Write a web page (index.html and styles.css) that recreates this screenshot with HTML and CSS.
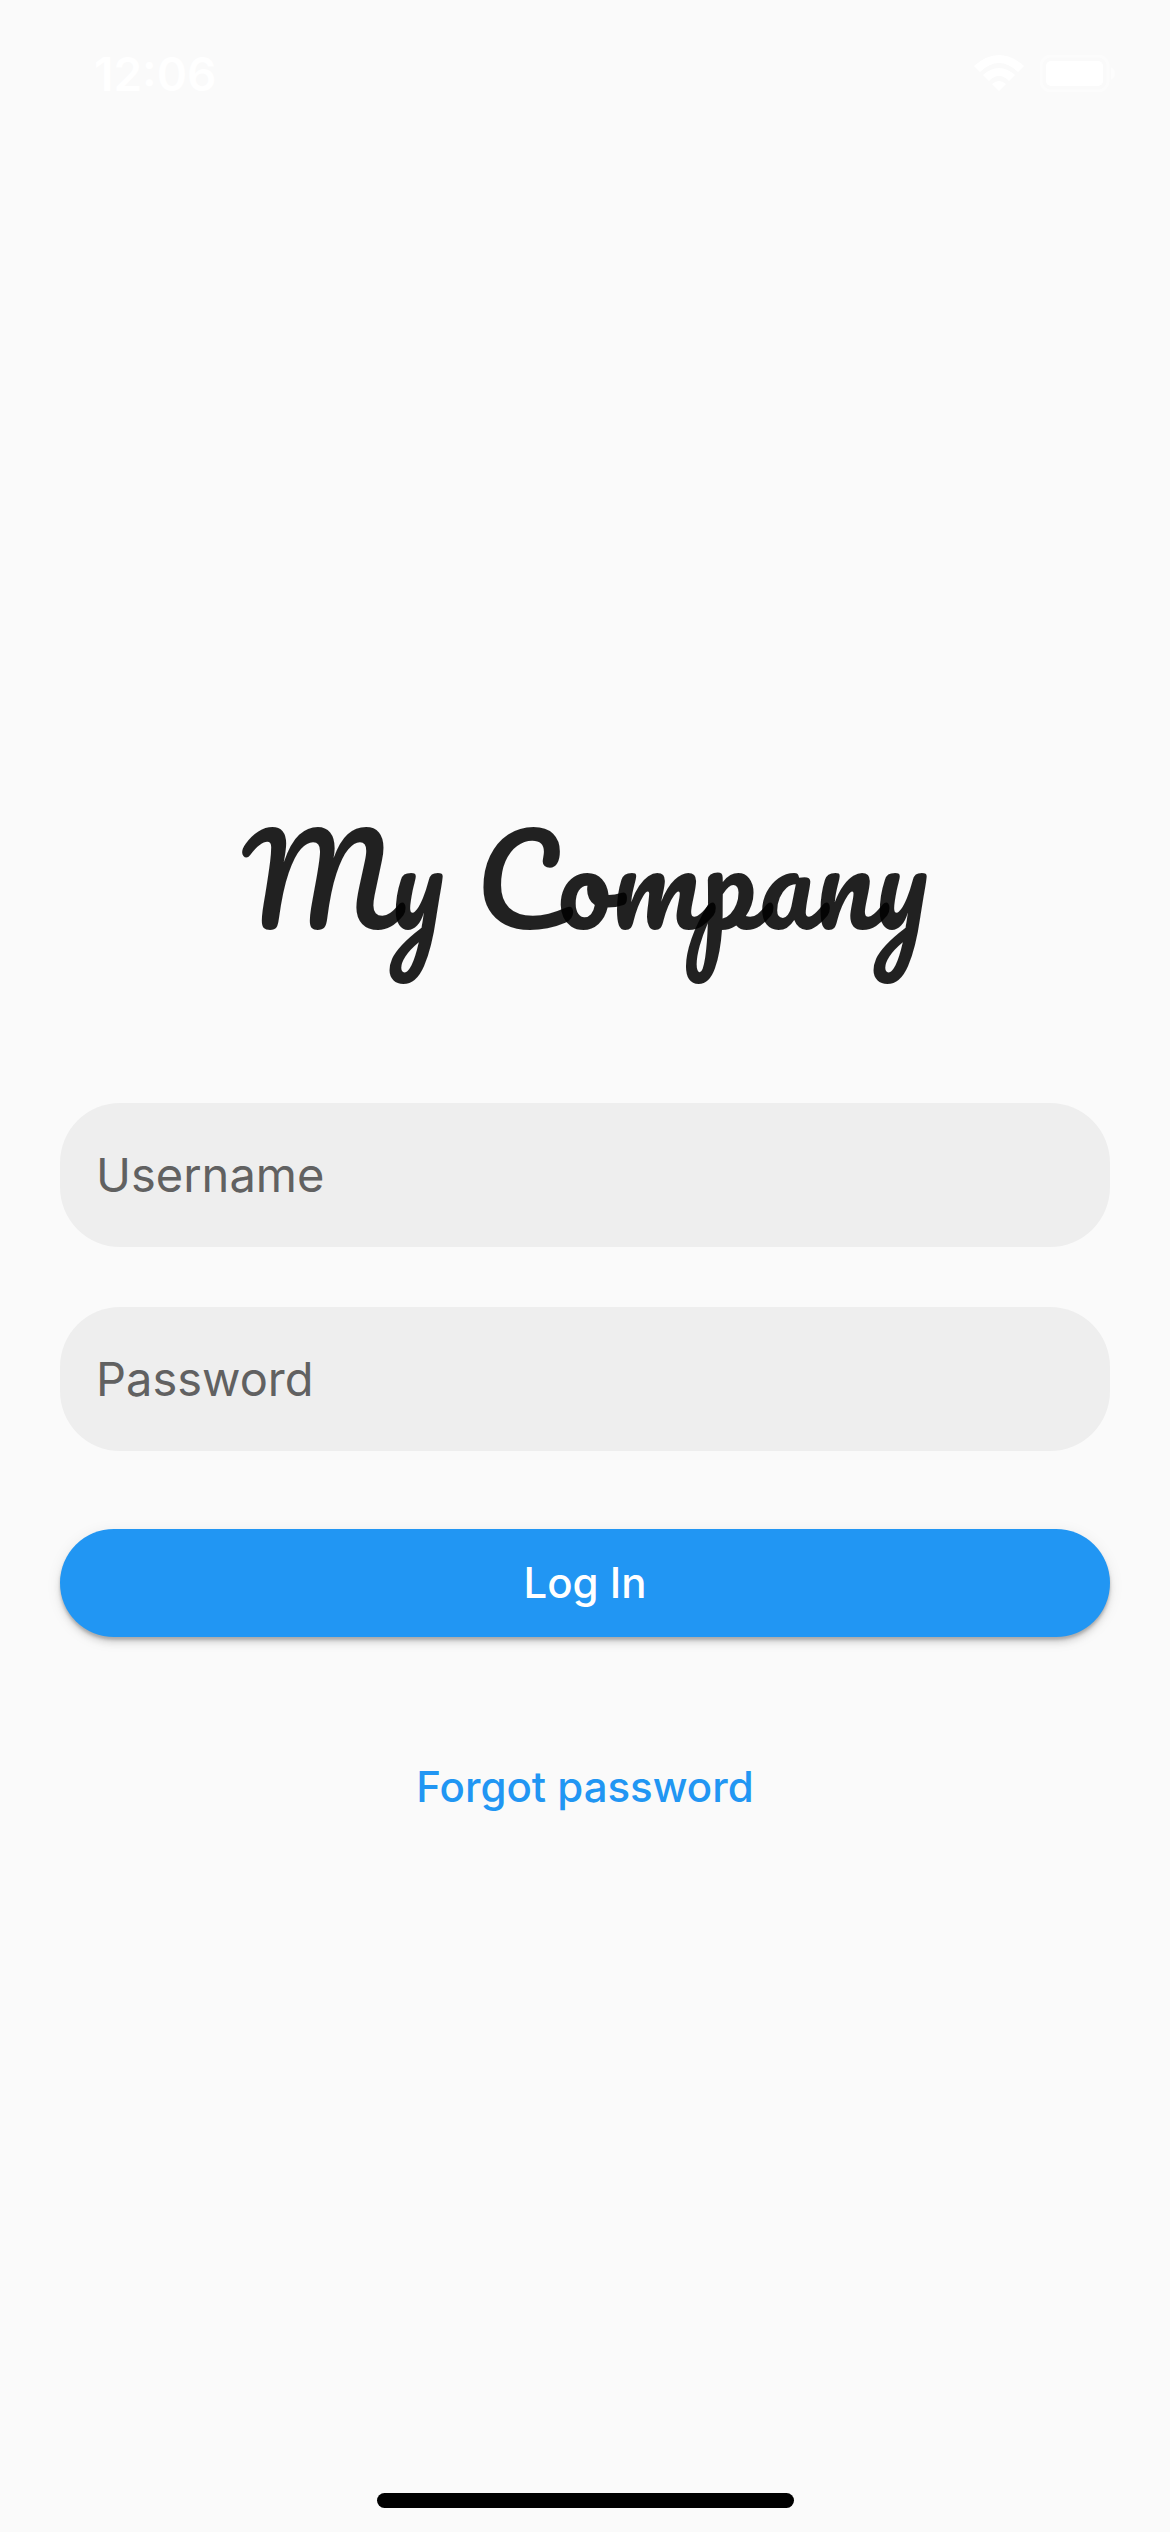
FILE: index.html
```html
<!DOCTYPE html>
<html lang="en">
<head>
<meta charset="utf-8">
<meta name="viewport" content="width=device-width, initial-scale=1">
<title>My Company</title>
<link rel="stylesheet" href="styles.css">
</head>
<body>
<header class="status-bar">
  <time class="clock">12:06</time>
  <div class="indicators">
    <svg class="wifi" viewBox="0 0 50 36" aria-hidden="true">
      <path d="M0 11Q25-11 50 11L44 17Q25-1 6 17Z"/>
      <path d="M9 20Q25 6 41 20L35 26Q25 16 15 26Z"/>
      <path d="M18 29Q25 23 32 29L25 36Z"/>
    </svg>
    <svg class="battery" viewBox="0 0 76 37" aria-hidden="true">
      <rect x="1" y="1" width="67" height="35" rx="10" fill="none" stroke="#fff" stroke-width="3" opacity=".4"/>
      <rect x="6" y="6" width="57" height="25" rx="5"/>
      <path d="M71 12Q75 14 75 18.500T71 25Z" opacity=".5"/>
    </svg>
  </div>
</header>
<main class="login">
  <h1 class="brand">My Company</h1>
  <form class="form">
    <input class="field" type="text" placeholder="Username" aria-label="Username" autocomplete="username">
    <input class="field" type="password" placeholder="Password" aria-label="Password" autocomplete="current-password">
    <button class="submit" type="submit">Log In</button>
    <a class="forgot" href="#forgot">Forgot password</a>
  </form>
</main>
<footer class="home-area"><div class="home-bar"></div></footer>
</body>
</html>
```
FILE: styles.css
```css
* {
  box-sizing: border-box;
}

body {
  display: flex;
  flex-direction: column;
  min-height: 100vh;
  margin: 0;
  background: #fafafa;
  font-family: Inter, "Liberation Sans", sans-serif;
}

.status-bar {
  display: flex;
  align-items: center;
  justify-content: space-between;
  height: 141px;
  padding: 6px 54px 0 94px;
  color: #fff;
}

.clock {
  font-size: 46px;
  font-weight: 600;
  line-height: 134px;
}

.indicators {
  display: flex;
  gap: 16px;
  fill: #fff;
}

.wifi {
  width: 50px;
  height: 36px;
}

.battery {
  width: 76px;
  height: 37px;
}

.login {
  display: flex;
  flex: 1;
  flex-direction: column;
  gap: 60px;
  justify-content: center;
  padding: 0 60px;
}

.brand {
  margin: 0;
  padding: 60px 0;
  color: rgba(0, 0, 0, .87);
  font-family: Pacifico, cursive;
  font-size: 120px;
  font-weight: 400;
  line-height: 210px;
  text-align: center;
}

.form {
  display: flex;
  flex-direction: column;
  gap: 60px;
}

.field {
  width: 100%;
  height: 144px;
  padding: 0 36px;
  border: 0;
  border-radius: 60px;
  background: #eee;
  color: #212121;
  font: 400 47px Inter, "Liberation Sans", sans-serif;
}

.field::placeholder {
  color: #616161;
  opacity: 1;
}

.submit {
  height: 108px;
  margin: 18px 0;
  border: 0;
  border-radius: 54px;
  background: #2196f3;
  box-shadow: 0 3px 3px rgba(0, 0, 0, .2), 0 6px 6px rgba(0, 0, 0, .1), 0 3px 15px rgba(0, 0, 0, .08);
  color: #fff;
  font: 500 42px Inter, "Liberation Sans", sans-serif;
}

.forgot {
  align-self: center;
  color: #2196f3;
  font-size: 42px;
  font-weight: 500;
  line-height: 144px;
  text-decoration: none;
}

.home-area {
  display: flex;
  align-items: flex-end;
  justify-content: center;
  height: 102px;
  padding-bottom: 24px;
}

.home-bar {
  width: 417px;
  height: 15px;
  border-radius: 8px;
  background: #000;
}
```
